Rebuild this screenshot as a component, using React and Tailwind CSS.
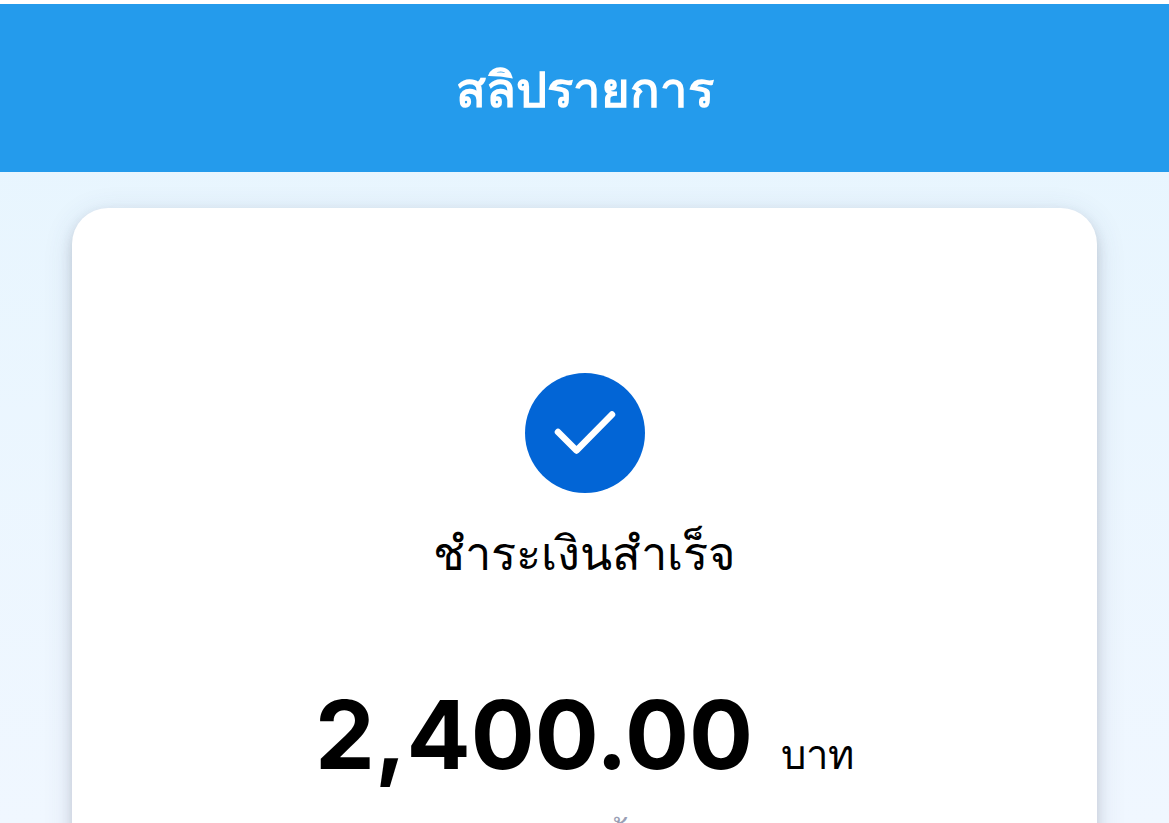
import React from 'react';

const slip = {
  title: 'สลิปรายการ',
  status: 'ชำระเงินสำเร็จ',
  amount: '2,400.00',
  currency: 'บาท',
  note: 'ยอดชำระทั้งหมด',
};

function Header({ title }) {
  return (
    <header className="flex h-[172px] shrink-0 items-center justify-center border-t-4 border-white bg-[#249bec] pt-1">
      <h1 className="text-[49px] leading-[72px] font-bold text-white">{title}</h1>
    </header>
  );
}

function SuccessIcon() {
  return (
    <svg className="size-[120px]" viewBox="0 0 120 120" fill="none" aria-hidden="true">
      <circle cx="60" cy="60" r="60" fill="#0265d6" />
      <path d="M33 59L51.500 77.500L87 41.500" stroke="#fff" strokeWidth="6.500" strokeLinecap="round" strokeLinejoin="round" />
    </svg>
  );
}

export default function App() {
  return (
    <div className="flex h-screen flex-col overflow-hidden bg-linear-to-b from-[#e6f5fe] to-[#f0f7ff] font-['Inter','Noto_Sans',sans-serif] text-black">
      <Header title={slip.title} />

      <main className="px-[72px] pt-9">
        <section className="flex flex-col items-center rounded-[36px] bg-white px-9 pt-[165px] pb-20 shadow-[0_6px_30px_rgba(60,70,120,0.14),0_6px_12px_rgba(60,60,60,0.18)]">
          <SuccessIcon />
          <p className="mt-6 text-[47px] leading-[72px]">{slip.status}</p>

          {/* Amount */}
          <p className="mt-[86px] flex items-baseline gap-7">
            <span className="text-[95px] leading-[120px] font-bold">{slip.amount}</span>
            <span className="text-[40px] leading-[60px]">{slip.currency}</span>
          </p>
          <p className="mt-5 text-4xl leading-[54px] text-[#9a9fb5]">{slip.note}</p>
        </section>
      </main>
    </div>
  );
}
